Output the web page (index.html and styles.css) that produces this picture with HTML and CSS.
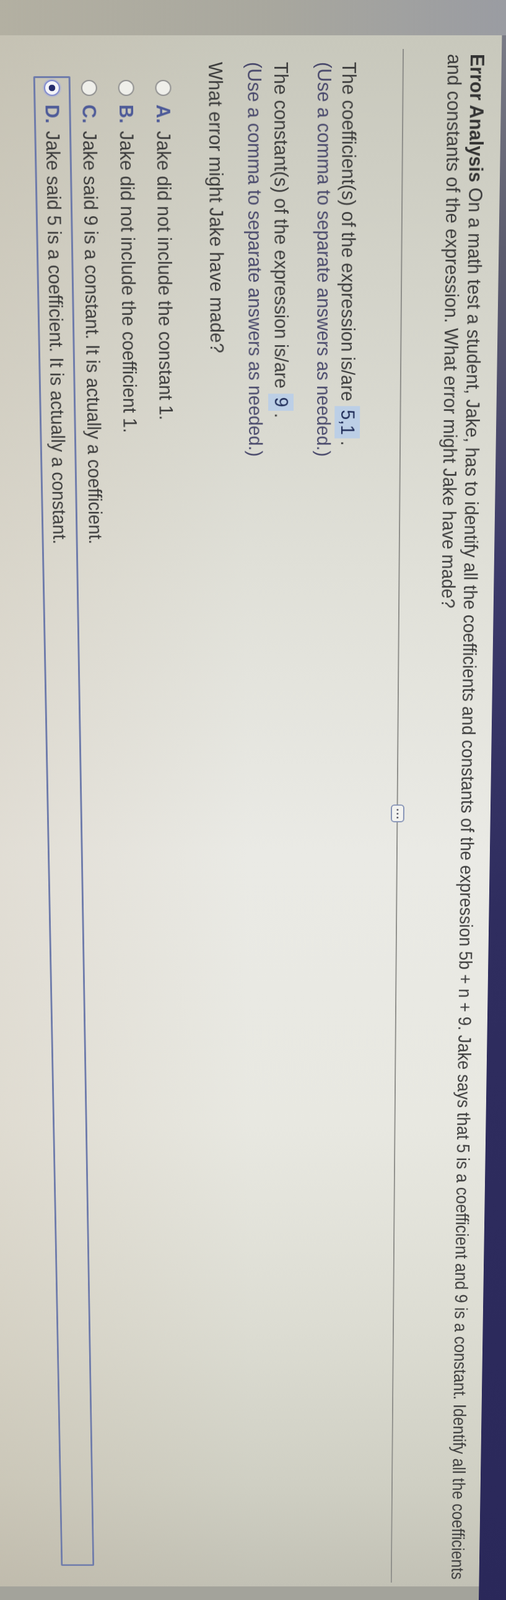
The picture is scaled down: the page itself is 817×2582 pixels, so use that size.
FILE: index.html
```html
<!DOCTYPE html>
<html lang="en">
<head>
<meta charset="utf-8">
<title>Error Analysis</title>
<link rel="stylesheet" href="styles.css">
</head>
<body>
<div class="photo">
<div class="screen">
  <div class="bezel"></div>
  <div class="sheet">
    <div class="question">
      <p class="qline"><b>Error Analysis</b> On a math test a student, Jake, has to identify all the coefficients and constants of the expression 5b + n + 9. Jake says that 5 is a coefficient and 9 is a constant. Identify all the coefficients</p>
      <p class="qline">and constants of the expression. What error might Jake have made?</p>
    </div>
    <div class="divider"><span class="more"><i></i><i></i><i></i></span></div>
    <div class="work">
      <p class="line l-coef">The coefficient(s) of the expression is/are <span class="ans">5,1</span>.</p>
      <p class="line l-hint1 hint">(Use a comma to separate answers as needed.)</p>
      <p class="line l-const">The constant(s) of the expression is/are <span class="ans">9</span>.</p>
      <p class="line l-hint2 hint">(Use a comma to separate answers as needed.)</p>
      <p class="line l-what">What error might Jake have made?</p>
      <ul class="choices">
        <li class="choice"><span class="radio"></span><span class="label">A.</span><span class="ctext">Jake did not include the constant 1.</span></li>
        <li class="choice"><span class="radio"></span><span class="label">B.</span><span class="ctext">Jake did not include the coefficient 1.</span></li>
        <li class="choice"><span class="radio"></span><span class="label">C.</span><span class="ctext">Jake said 9 is a constant. It is actually a coefficient.</span></li>
        <li class="choice selected"><span class="radio"></span><span class="label">D.</span><span class="ctext">Jake said 5 is a coefficient. It is actually a constant.</span></li>
      </ul>
    </div>
  </div>
</div>
</div>
</body>
</html>
```

FILE: styles.css
```css
html {
  height: 100%;
  overflow: hidden;
  background: linear-gradient(90deg, #b3b0a2 0%, #a8a79e 55%, #9a9ca2 100%);
}

body {
  margin: 0;
  height: 100%;
  overflow: hidden;
  font-family: "Liberation Sans", Arial, sans-serif;
  font-size: 30.75px;
  color: #3d3d3d;
}

/* the photo frame clips the projected screen */
.photo {
  width: 817px;
  height: 2582px;
  overflow: hidden;
}

/* the photographed screen: laid out flat, then projected into the photo */
.screen {
  width: 2860px;
  height: 980px;
  display: flex;
  flex-direction: column;
  background: #a3a39b;
  transform-origin: 0 0 0;
  transform: matrix3d(0.021032, 1.005135, 0, 0.0000442791,
                      -1.0013284, 0, 0, 0,
                      0, 0, 1, 0,
                      870.5247, 56.96153, 0, 1);
  filter: blur(0.5px);
}

.bezel {
  flex: none;
  height: 60px;
  background: linear-gradient(90deg, #7a7b86 0px, #5c5c6e 350px, #3c3a6a 900px, #2f2d5f 1500px, #2a285a 2860px);
}

.sheet {
  flex: 1;
  width: 2807px;
  box-sizing: border-box;
  padding: 21px 0 0 30px;
  background:
    linear-gradient(180deg, rgba(0, 0, 0, 0) 45%, rgba(185, 165, 140, 0.22) 100%),
    linear-gradient(90deg, #c8c8bc 0px, #d3d3c9 400px, #e0e0d8 900px, #eaeae5 1400px, #e8e8e1 1900px, #dcdcd2 2300px, #cfcfc3 2600px, #c2c1b5 2807px);
}

.qline,
.line {
  margin: 0;
  height: 37px;
  line-height: 37px;
  white-space: nowrap;
}

.qline b {
  font-weight: bold;
  color: #333;
}

.divider {
  position: relative;
  margin: 62.65px 0 0 -8px;
  width: 2777px;
  height: 2px;
  background: #8e8e8a;
}

.more {
  position: absolute;
  left: 1288px;
  top: -10.5px;
  width: 32px;
  height: 23px;
  box-sizing: border-box;
  border: 2px solid #8391b5;
  border-radius: 6px;
  background: #f3f3f0;
  display: flex;
  align-items: center;
  justify-content: center;
  gap: 4px;
}

.more i {
  width: 3px;
  height: 3px;
  border-radius: 50%;
  background: #3a3a4a;
}

.work {
  padding-left: 13px;
}

.l-coef { margin-top: 68.35px; }
.l-hint1 { margin-top: 3px; }
.l-const { margin-top: 33px; }
.l-hint2 { margin-top: 6px; }
.l-what { margin-top: 26px; }

.hint {
  color: #4a4a6c;
}

.ans {
  display: inline-block;
  line-height: 30px;
  padding: 6px 6px;
  margin: -3px 4px -3px 0;
  background: #bccfe6;
  color: #1f2c58;
}

.choices {
  list-style: none;
  margin: 36.15px 0 0 23px;
  padding: 0;
  width: 2699px;
}

.choice {
  height: 60px;
  box-sizing: border-box;
  border: 3px solid transparent;
  padding-left: 3px;
  display: flex;
  align-items: center;
  line-height: 37px;
  white-space: nowrap;
}

.choice.selected {
  border-color: #6e7bab;
  border-radius: 2px;
}

.radio {
  flex: none;
  width: 26px;
  height: 26px;
  box-sizing: border-box;
  border-radius: 50%;
  border: 2px solid #8f8f8f;
  background: #efefea;
  margin-right: 14px;
}

.selected .radio {
  border-color: #7d87cf;
  background: radial-gradient(circle, #262c6e 0 5px, #f4f4f8 5.6px);
  box-shadow: 0 0 0 2px rgba(150, 160, 230, 0.35);
}

.label {
  flex: none;
  width: 43px;
  font-weight: bold;
  color: #4d5a98;
}
```
